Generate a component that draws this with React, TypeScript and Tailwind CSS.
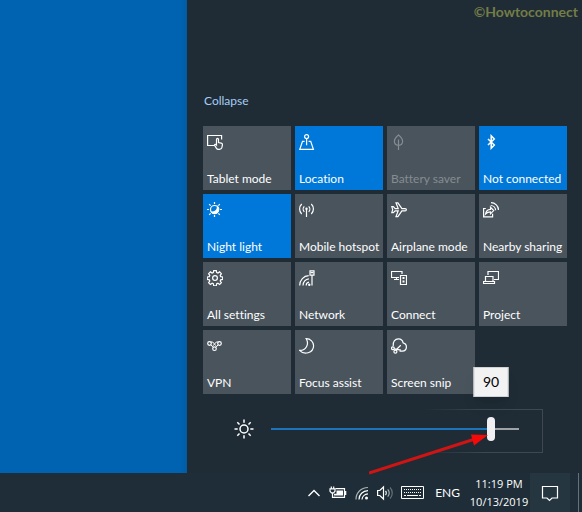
import { useState, type ReactNode } from "react";

type Tile = {
  label: string;
  icon: ReactNode;
  on?: boolean;
  disabled?: boolean;
};

const Icon = ({ children, className = "size-4" }: { children: ReactNode; className?: string }) => (
  <svg
    viewBox="0 0 16 16"
    className={className}
    fill="none"
    stroke="currentColor"
    strokeWidth="1.2"
    aria-hidden="true"
  >
    {children}
  </svg>
);

const tiles: Tile[] = [
  {
    label: "Tablet mode",
    icon: (
      <Icon>
        <path d="M7.5 11.500H.6V1.500h14v4" />
        <path d="M9.500 11V5.500c0-1.400 2-1.400 2 0v3.100l2.600.5c1 .2 1.400.8 1.300 1.700l-.4 2.400c-.3 1.500-1.200 2.200-2.400 2.200h-1.200c-1 0-1.600-.5-2.100-1.300L7.400 11c.5-.9 1.600-.7 2.100 0z" />
      </Icon>
    ),
  },
  {
    label: "Location",
    on: true,
    icon: (
      <Icon>
        <circle cx="7.600" cy="2.600" r="2" />
        <path d="M7.600 4.600v6.600M5.600 7.400H3.500L.8 15.300h13.600l-2.700-7.900H9.600" />
      </Icon>
    ),
  },
  {
    label: "Battery saver",
    disabled: true,
    icon: (
      <Icon>
        <path d="M7.500 1C5 3 3.400 5 3.400 7.300c0 2.600 1.800 4 4.100 4s4.100-1.400 4.100-4C11.600 5 10 3 7.500 1zM7.500 5.500V16" />
      </Icon>
    ),
  },
  {
    label: "Not connected",
    on: true,
    icon: (
      <Icon>
        <path strokeWidth="1.500" d="M5 5l6.300 6-3.100 3.200V1.800L11.300 5 5 11" />
      </Icon>
    ),
  },
  {
    label: "Night light",
    on: true,
    icon: (
      <Icon>
        <circle cx="7.500" cy="7.500" r="4" />
        <path d="M10.500 4.500c.2 3.500-2.300 5.700-5.900 5.600 1.500 2.200 5.200 2 6.500-.6.900-1.800.6-3.900-.6-5z" fill="currentColor" />
        <path d="M7.500 0v2M7.500 13v2M0 7.500h2M13 7.500h2M2.200 2.200l1.400 1.400M11.400 11.400l1.400 1.400M2.200 12.800l1.400-1.400M11.400 3.600l1.400-1.400" />
      </Icon>
    ),
  },
  {
    label: "Mobile hotspot",
    icon: (
      <Icon>
        <path d="M7.500 7v8M5.300 9.800c-1.500-1.500-1.500-4 0-5.500M9.700 9.800c1.500-1.500 1.500-4 0-5.500M2.700 12c-2.800-2.800-2.800-7.200 0-10M12.300 12c2.800-2.800 2.800-7.200 0-10" />
        <circle cx="7.500" cy="6.800" r=".6" fill="currentColor" />
      </Icon>
    ),
  },
  {
    label: "Airplane mode",
    icon: (
      <Icon>
        <path d="M.8 4.700h1.500l1.900 1.900h3L5 .8h1.900l4 5.800h3.200c1.700 0 1.700 2.200 0 2.200h-3.200l-4 5.800H5l2.200-5.800h-3l-1.900 1.900H.8l.9-3z" />
      </Icon>
    ),
  },
  {
    label: "Nearby sharing",
    icon: (
      <Icon>
        <path d="M2.800 6.500H.6v8.300h9v-3" />
        <path d="M2.500 12c.6-3 2.500-4.500 5-4.600V5.300l3.200 3.300-3.200 3.200V9.800c-2 0-3.600.7-5 2.200z" />
        <path d="M7.700 3.500c2.700 0 4.800 2.100 4.900 4.800M8 .7c4.200 0 7.400 3.200 7.500 7.300" />
      </Icon>
    ),
  },
  {
    label: "All settings",
    icon: (
      <Icon>
        <path d="M6.700.6h2.600l.4 2 1.200.5 1.700-1.200 1.800 1.800-1.200 1.700.5 1.200 2 .4v2.400l-2 .4-.5 1.200 1.200 1.700-1.800 1.800-1.700-1.200-1.200.5-.4 2H6.700l-.4-2-1.200-.5-1.700 1.200-1.800-1.800 1.200-1.700-.5-1.200-2-.4V7l2-.4.5-1.200L1.600 3.700l1.800-1.800 1.700 1.200 1.200-.5z" />
        <circle cx="8" cy="8.100" r="2.400" />
      </Icon>
    ),
  },
  {
    label: "Network",
    icon: (
      <Icon>
        <path d="M.7 15.500C.7 10 4.700 5.800 9.700 5.600M4 15.500c0-3.600 2.600-6.400 5.900-6.700M7.200 15.500c0-1.700 1.200-3.100 2.800-3.300" />
        <path d="M11 .8h4v4.400h-4zM13 5.200v10.300M11.800 2.600h2.400" />
        <circle cx="10.300" cy="14.800" r=".6" fill="currentColor" />
      </Icon>
    ),
  },
  {
    label: "Connect",
    icon: (
      <Icon>
        <path d="M8 7.500H.5v-6h10.500V4M3 9.500h5M5.500 7.500v2" />
        <path d="M9.500 5.500h6v9h-6z" />
        <path d="M11.500 8h2M11.500 11.500h2" strokeWidth="2" />
      </Icon>
    ),
  },
  {
    label: "Project",
    icon: (
      <Icon>
        <path d="M5 5V1.500h10.500v8H11" />
        <path d="M2.500 11.500V6.500h7.500v5M.5 11.500h11v2H.5z" />
      </Icon>
    ),
  },
  {
    label: "VPN",
    icon: (
      <Icon>
        <circle cx="2.500" cy="5.500" r="1.800" />
        <circle cx="12.500" cy="5.500" r="1.800" />
        <circle cx="7.500" cy="10.700" r="1.800" />
        <path d="M3.800 6.800l2.400 2.600M11.200 6.800L8.800 9.400M3.500 4h2.200l3.300 3.800M11.500 4H9.300L6 7.800" strokeWidth="1" />
      </Icon>
    ),
  },
  {
    label: "Focus assist",
    icon: (
      <Icon>
        <path d="M7.200.7c3.300 5.500-.3 12-6.600 11.700C5 17.300 14.400 15.300 14.600 7.800 14.600 4 11.600.8 7.200.7z" />
      </Icon>
    ),
  },
  {
    label: "Screen snip",
    icon: (
      <Icon>
        <path d="M2.200 8.200C1.600 3.800 4 .8 7.400.8c2.700 0 4.300 1.600 4.700 4 2.100.5 3.300 2 3.300 4.100 0 2.500-1.700 4.200-4.200 4.200H8.500" />
        <circle cx="1.900" cy="10.300" r="1.400" />
        <circle cx="4.400" cy="13.700" r="1.500" />
        <path d="M3.100 10.800l6.900 1.400M4.600 12.200L9.800 7.300" />
      </Icon>
    ),
  },
];

const QuickAction = ({ label, icon, on = false, disabled }: Tile) => {
  const [active, setActive] = useState(on);

  return (
    <button
      type="button"
      disabled={disabled}
      aria-pressed={active}
      onClick={() => setActive(!active)}
      className={`flex h-16 flex-col items-start justify-between px-1 pt-2 pb-[3px] text-left leading-4 whitespace-nowrap ${
        active ? "bg-[#0078d9]" : "bg-[#4a545d]"
      } ${disabled ? "text-[#858c92]" : "text-white"}`}
    >
      {icon}
      {label}
    </button>
  );
};

const Brightness = () => {
  const [value, setValue] = useState(90);
  // the thumb is 8px wide, so its centre travels the track minus 8px
  const thumb = `calc(${value}% + ${4 - value * 0.08}px)`;

  return (
    <div className="flex h-[79px] items-start pt-[23px] pr-12 pl-[31px]">
      <label htmlFor="brightness" aria-label="Brightness" className="mr-[17px] flex h-6 w-5 items-center">
        <svg viewBox="0 0 20 20" className="size-5" fill="none" stroke="white" strokeWidth="1.500">
          <circle cx="10" cy="10" r="4" />
          <path d="M10 .5v3.200M10 16.300v3.200M.5 10h3.200M16.300 10h3.200M3.300 3.300l2.200 2.200M14.500 14.500l2.200 2.200M3.300 16.700l2.200-2.200M14.500 5.500l2.200-2.200" />
        </svg>
      </label>
      <div className="relative h-6 flex-1">
        <div className="absolute -top-2 -right-6 h-11 w-[120px] border border-l-0 border-[#3d4850] mask-l-from-50%" />
        <input
          id="brightness"
          type="range"
          min={0}
          max={100}
          value={value}
          onChange={(e) => setValue(Number(e.target.value))}
          style={{
            backgroundImage: `linear-gradient(to right, #1c74bd ${value}%, #9da2a6 ${value}%)`,
          }}
          className="relative block h-6 w-full appearance-none bg-[length:100%_2px] bg-center bg-no-repeat outline-none [&::-webkit-slider-thumb]:h-6 [&::-webkit-slider-thumb]:w-2 [&::-webkit-slider-thumb]:appearance-none [&::-webkit-slider-thumb]:rounded-full [&::-webkit-slider-thumb]:bg-[#f0f0f2]"
        />
        <output
          htmlFor="brightness"
          style={{ left: thumb }}
          className="absolute bottom-11 w-[35px] -translate-x-1/2 border border-[#d0d2d4] bg-[#f2f2f2] text-center text-sm leading-7 text-black shadow-lg"
        >
          {value}
        </output>
        <svg
          viewBox="0 0 122 42"
          style={{ left: thumb }}
          className="pointer-events-none absolute top-4 h-[42px] w-[122px] -translate-x-full"
          aria-hidden="true"
        >
          <path d="M0 40L106 6" stroke="#d01414" strokeWidth="3" />
          <path d="M119 2L105 12.500L102 1.500z" fill="#f50a0a" />
        </svg>
      </div>
    </div>
  );
};

const Taskbar = () => (
  <footer className="flex h-[39px] items-center justify-end bg-[#1e2d37] text-white">
    <button type="button" aria-label="Show hidden icons" className="mr-2">
      <svg viewBox="0 0 14 14" className="size-[14px]" fill="none" stroke="white" strokeWidth="1.400">
        <path d="M1.500 10L7 4.500l5.500 5.500" />
      </svg>
    </button>
    <button type="button" aria-label="Battery" className="mr-2">
      <svg viewBox="0 0 18 16" className="h-4 w-[18px]" fill="none" stroke="white" strokeWidth="1.200">
        <path d="M6.500 3.600h9v8.800H5M15.500 6.500h1.200v3h-1.200" />
        <path d="M7.500 5.500H14v5H5V8.800h2.500z" fill="white" stroke="none" />
        <path d="M2.300 1.500v2.200M4.700 1.500v2.200M1 3.800h5v2.400L4.600 7.800H2.400L1 6.200zM3.500 8v4.400H6" />
      </svg>
    </button>
    <button type="button" aria-label="Network" className="mr-2">
      <svg viewBox="0 0 14 16" className="h-4 w-[14px]" fill="none" stroke="white" strokeWidth="1.200">
        <path d="M1 14.500C1 7.500 6 2.700 13 2.500" stroke="#a9b0b4" />
        <path d="M4 14.500c0-5 3.800-8.600 9-8.800M7 14.500C7.200 11.500 9.700 9 13 8.800" />
        <circle cx="11.500" cy="13" r="1.500" fill="white" stroke="none" />
      </svg>
    </button>
    <button type="button" aria-label="Volume" className="mr-2">
      <svg viewBox="0 0 16 16" className="size-4" fill="none" stroke="white" strokeWidth="1.200">
        <path d="M.6 5.500h2.200L6.500 2v12l-3.700-3.500H.6z" />
        <path d="M8.500 6c1 1 1 3 0 4" />
        <path d="M10.700 4.300c2 2 2 5.400 0 7.400" stroke="#a9b0b4" />
        <path d="M13 2.500c3 3 3 8 0 11" stroke="#65717a" />
      </svg>
    </button>
    <button type="button" aria-label="Touch keyboard" className="mr-[10px]">
      <svg viewBox="0 0 24 16" className="h-4 w-6" fill="none" stroke="white" strokeWidth="1">
        <path d="M.5 1.500h22v12H.5z" />
        <path d="M3 4.500h18M3 7.500h18" strokeDasharray="1 1" />
        <path d="M3 10.500h2M6 10.500h11M18 10.500h2" />
      </svg>
    </button>
    <button type="button" className="mr-2">ENG</button>
    <button
      type="button"
      className="h-full w-[62px] text-center font-['Open_Sans',sans-serif] text-[11px] leading-[18px] whitespace-nowrap"
    >
      <time dateTime="2019-10-13T23:19">
        11:19 PM
        <br />
        10/13/2019
      </time>
    </button>
    <button
      type="button"
      aria-label="Action center"
      className="flex h-full w-10 items-center justify-center bg-[#263640]"
    >
      <svg viewBox="0 0 18 18" className="size-[18px]" fill="none" stroke="white" strokeWidth="1.200">
        <path d="M1.500 2.500h15v11.500H11l-2.500 2.500L6 14H1.500z" />
      </svg>
    </button>
    <div className="ml-2 mr-[3px] h-full w-px bg-[#65717a]" />
  </footer>
);

const App = () => (
  <div className="flex min-h-screen flex-col bg-[#1f2c35] font-['Lato','Open_Sans',sans-serif] text-xs [font-variant-ligatures:none]">
    <main className="grid flex-1 grid-cols-[187fr_395fr] bg-[#0063b1]">
      <div className="bg-linear-to-l from-[#005ca3] to-[#0063b1] to-4%" />
      <aside className="flex min-w-0 flex-col justify-between bg-[#1f2c35]">
        <p className="pr-1 text-right text-sm leading-6 font-bold text-[#747c48]">©Howtoconnect</p>
        <div className="pr-[15px] pl-4">
          <button type="button" className="mb-4 block px-px leading-[18px] text-[#a6cdf5]">
            Collapse
          </button>
          <div className="grid grid-cols-4 gap-1">
            {tiles.map((tile) => (
              <QuickAction key={tile.label} {...tile} />
            ))}
          </div>
          <Brightness />
        </div>
      </aside>
    </main>
    <Taskbar />
  </div>
);

export default App;
